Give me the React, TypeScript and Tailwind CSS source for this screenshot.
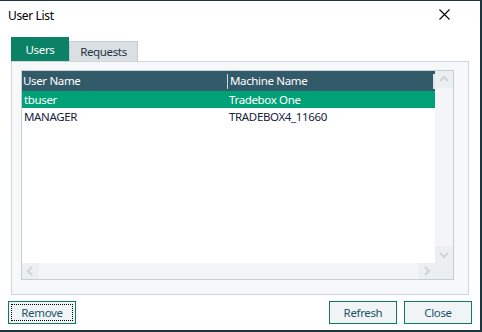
import React from "react";

const font = { fontFamily: '"Noto Sans", "Open Sans", Arial, sans-serif' };

function Chevron({ dir }: { dir: "up" | "down" | "left" | "right" }) {
  const d =
    dir === "up"
      ? "M2 7 L6 3 L10 7"
      : dir === "down"
      ? "M2 4 L6 8 L10 4"
      : dir === "left"
      ? "M7 2 L3 6 L7 10"
      : "M4 2 L8 6 L4 10";
  return (
    <svg width="12" height="12" viewBox="0 0 12 12">
      <path d={d} fill="none" stroke="#cfd4d8" strokeWidth="2" />
    </svg>
  );
}

export default function App() {
  return (
    <div
      className="w-[482px] h-[332px] bg-white border-t border-r-2 border-b-2 border-[#1c3640] flex flex-col text-[11.5px] tracking-[-0.35px] overflow-hidden"
      style={font}
    >
      {/* Title bar */}
      <div className="h-[30px] flex items-center justify-between pl-[8px] pr-[30px]">
        <span className="text-[12px] text-black leading-none">User List</span>
        <svg width="11" height="11" viewBox="0 0 11 11" className="mt-[-4px]">
          <path d="M0.5 0.5 L10.5 10.5 M10.5 0.5 L0.5 10.5" stroke="#000" strokeWidth="1.1" />
        </svg>
      </div>

      {/* Tabs */}
      <div className="ml-[11px] mt-[7px] flex items-end h-[23px]">
        <div className="w-[58px] h-[24px] bg-[#0b8165] text-white flex items-center justify-center pt-[1px] relative z-10">
          Users
        </div>
        <div className="w-[69px] h-[20px] bg-[#d9dfe3] border border-[#c6ced3] border-b-0 text-[#1f3340] flex items-center justify-center">
          Requests
        </div>
      </div>

      {/* Panel */}
      <div className="ml-[11px] w-[458px] h-[234px] bg-[#f7f8f9] border border-[#cfd6da] pt-[8px] pl-[9px]">
        <div className="w-[433px] h-[210px] border border-[#c5ced3] bg-white flex flex-col">
          <div className="flex flex-1 min-h-0">
            {/* list */}
            <div className="w-[413px] flex flex-col">
              <div className="h-[20px] bg-[#325a68] text-white flex items-center relative">
                <span className="pl-[1px] w-[205px]">User Name</span>
                <div className="w-px h-[15px] bg-[#cfd8dc]" />
                <span className="pl-[2px]">Machine Name</span>
                <div className="absolute right-0 top-[3px] w-[2px] h-[15px] bg-[#dfe5e8]" />
              </div>
              <div className="h-[17px] bg-[#00a176] text-white flex items-center">
                <span className="pl-[2px] w-[206px]">tbuser</span>
                <span className="pl-[1px]">Tradebox One</span>
              </div>
              <div className="h-[17px] text-[#14233f] flex items-center">
                <span className="pl-[2px] w-[206px]">MANAGER</span>
                <span className="pl-[1px]">TRADEBOX4_11660</span>
              </div>
            </div>
            {/* vertical scrollbar */}
            <div className="w-[18px] bg-[#f4f5f6] flex flex-col justify-between">
              <div className="h-[17px] bg-[#eceff1] flex items-center justify-center">
                <Chevron dir="up" />
              </div>
              <div className="h-[17px] bg-[#eceff1] flex items-center justify-center">
                <Chevron dir="down" />
              </div>
            </div>
          </div>
          {/* horizontal scrollbar */}
          <div className="h-[16px] flex">
            <div className="w-[413px] bg-[#f4f5f6] flex justify-between">
              <div className="w-[17px] bg-[#eceff1] flex items-center justify-center">
                <Chevron dir="left" />
              </div>
              <div className="w-[17px] bg-[#eceff1] flex items-center justify-center">
                <Chevron dir="right" />
              </div>
            </div>
            <div className="w-[18px] bg-[#eceff1]" />
          </div>
        </div>
      </div>

      {/* Buttons */}
      <div className="flex items-center mt-[6px] pl-[8px] pr-[8px]">
        <button className="w-[68px] h-[23px] border border-[#0e7a5c] bg-[#f1f4f6] flex items-center justify-center p-[2px]">
          <span className="w-full h-full border border-dotted border-black flex items-center justify-center text-[#1c5466]">
            Remove
          </span>
        </button>
        <div className="flex-1" />
        <button className="w-[68px] h-[23px] border border-[#0e7a5c] bg-[#f1f4f6] text-[#1c5466] flex items-center justify-center">
          Refresh
        </button>
        <button className="ml-[7px] w-[68px] h-[23px] border border-[#0e7a5c] bg-[#f1f4f6] text-[#1c5466] flex items-center justify-center">
          Close
        </button>
      </div>
    </div>
  );
}
